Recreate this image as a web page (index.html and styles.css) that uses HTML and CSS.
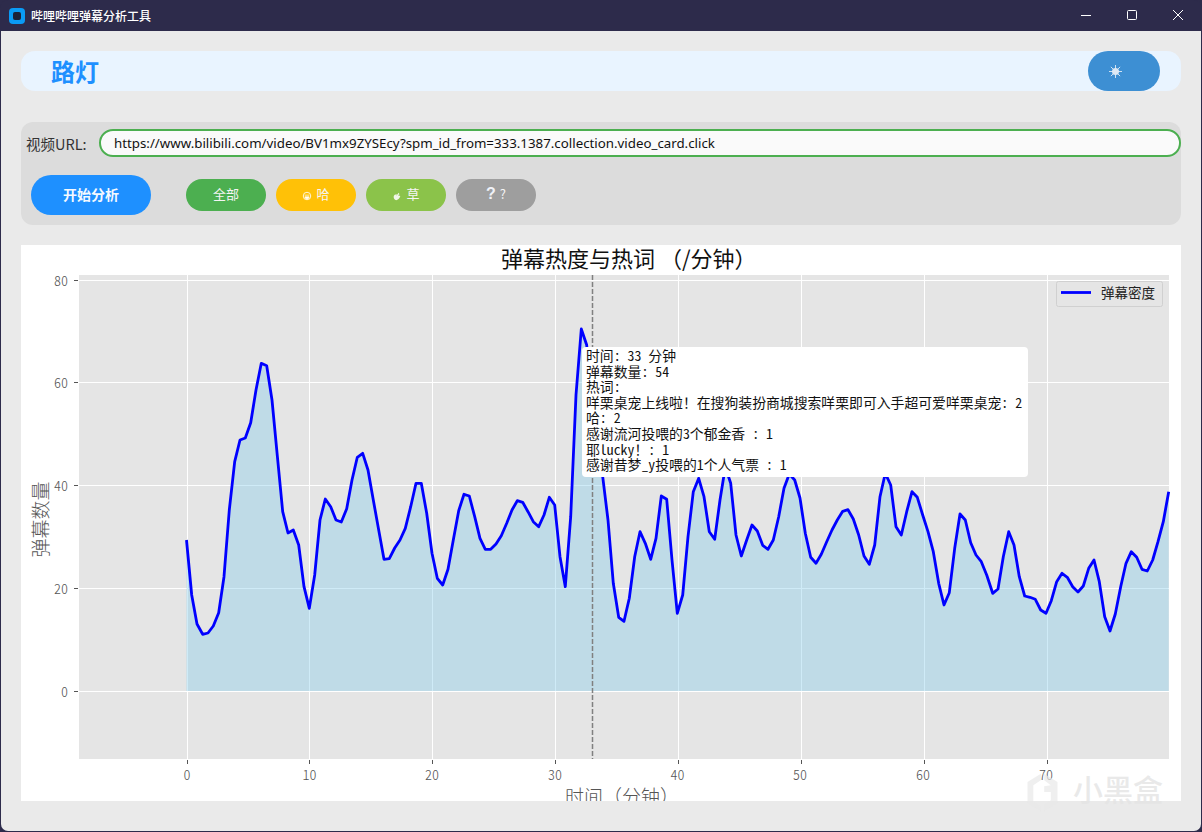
FILE: index.html
```html
<!DOCTYPE html>
<html lang="zh">
<head>
<meta charset="utf-8">
<title>哔哩哔哩弹幕分析工具</title>
<link rel="stylesheet" href="styles.css">
</head>
<body>
<div class="window">
  <div class="titlebar">
    <svg class="app-icon" viewBox="0 0 16 16"><rect width="16" height="16" rx="4" fill="#0a9bf5"/><rect x="4" y="4" width="8" height="8" rx="2" fill="#1c2238"/></svg>
    <span class="app-title">哔哩哔哩弹幕分析工具</span>
    <div class="win-controls">
      <svg class="win-btn" viewBox="0 0 46 31"><path d="M18 15.5h10" stroke="#fff" fill="none"/></svg>
      <svg class="win-btn" viewBox="0 0 46 31"><rect x="18.5" y="10.5" width="9" height="9" rx="1" stroke="#fff" fill="none"/></svg>
      <svg class="win-btn" viewBox="0 0 46 31"><path d="M18 10l10 10M28 10l-10 10" stroke="#fff" fill="none"/></svg>
    </div>
  </div>
  <main class="content">
    <header class="header">
      <h1 class="user-name">路灯</h1>
      <div class="theme-btn">
        <svg class="sun" viewBox="0 0 14 14"><circle cx="7" cy="7" r="3.8" fill="#dce8f4"/><path d="M7 0v14M0 7h14M2 2l10 10M12 2L2 12" stroke="#dce8f4" stroke-width="1"/></svg>
      </div>
    </header>
    <section class="panel">
      <div class="url-row">
        <span class="url-label">视频URL:</span>
        <div class="url-input">https://www.bilibili.com/video/BV1mx9ZYSEcy?spm_id_from=333.1387.collection.video_card.click</div>
      </div>
      <div class="action-row">
        <div class="start-btn">开始分析</div>
        <div class="filters">
          <div class="filter green">全部</div>
          <div class="filter yellow">
            <svg class="f-icon" viewBox="0 0 12 12"><circle cx="6" cy="6" r="4.5" fill="none" stroke="#fff" stroke-width="1"/><path d="M3.2 5h5.6M3.5 7h5a2.5 2.5 0 0 1-5 0z" stroke="#fff" stroke-width=".8" fill="#fff"/></svg>
            <span>哈</span>
          </div>
          <div class="filter lime">
            <svg class="f-icon" viewBox="0 0 12 12"><path d="M2 7c0-2 2-3 4-3L5 6l3-4 1 2-2 1 3 1c-1 3-3 5-5 5S2 9 2 7z" fill="#f1f6e8"/></svg>
            <span>草</span>
          </div>
          <div class="filter grey">
            <b class="q-icon">?</b>
            <span>?</span>
          </div>
        </div>
      </div>
    </section>
    <section class="chart">
      <svg class="plot" viewBox="21 245 1160 556" width="1160" height="556">
        <text class="chart-title" x="501" y="267">弹幕热度与热词 （/分钟）</text>
        <rect x="79" y="275" width="1090" height="484" fill="#e5e5e5"/>
        <g class="grid">
          <path d="M79 280.5H1169M79 382.5H1169M79 485.5H1169M79 588.5H1169M79 691.5H1169"/>
          <path d="M187.5 275V759M309.5 275V759M432.5 275V759M555.5 275V759M678.5 275V759M801.5 275V759M924.5 275V759M1047.5 275V759"/>
        </g>
        <g class="ticks">
          <path d="M74 280.5h4M74 382.5h4M74 485.5h4M74 588.5h4M74 691.5h4"/>
          <path d="M187.5 760v4M309.5 760v4M432.5 760v4M555.5 760v4M678.5 760v4M801.5 760v4M924.5 760v4M1047.5 760v4"/>
        </g>
        <g class="tick-text" text-anchor="end">
          <text x="68" y="285.5">80</text><text x="68" y="387.5">60</text><text x="68" y="490.5">40</text><text x="68" y="593.5">20</text><text x="68" y="696.5">0</text>
        </g>
        <g class="tick-text" text-anchor="middle">
          <text x="187" y="780">0</text><text x="309.5" y="780">10</text><text x="432" y="780">20</text><text x="555" y="780">30</text><text x="677.5" y="780">40</text><text x="800" y="780">50</text><text x="923" y="780">60</text><text x="1046" y="780">70</text>
        </g>
        <text class="axis-label" x="565" y="804">时间（分钟）</text>
        <text class="axis-label" text-anchor="middle" transform="translate(48 519.5) rotate(-90)">弹幕数量</text>
        <polygon class="area" points="186.5,691 186.5,540 191.7,595 197,624 202.7,634.3 208,633 213.3,626 218.7,612.7 224,576.7 229.3,510 234.7,461.7 240,440 245.3,438 250.7,422.7 256,390 261.3,363.3 266.7,365.7 272,400 277.4,456.7 282.7,511.7 288,533 293.3,530 298.7,545 304,586.7 309.3,608.3 314.7,575 320,520 325.3,499 330.7,506.7 336,520 341.3,522 346.7,508.7 352,480 357.3,457.3 362.7,453.3 368,470 373.3,500 378.7,530 384,559.3 389.3,558.7 394.7,548 400,540 405.3,528.3 410.7,506.7 416,483.3 421.3,483.3 426.7,513.3 432,553.3 437.3,578.3 442.7,585 448,569.3 453.3,540 458.7,510.7 464,494.3 469.3,496 474.7,516.7 480,538.3 485.3,549.3 490.7,549.3 496,544 501.3,535.7 506.7,523.3 512,510 517.3,500.7 522.7,502.3 528,511.7 533.3,521.7 538.7,526.7 544,515 549.3,497.3 554.7,505 560,556.7 565.3,586.7 570.7,516.7 576,395 581.3,329 586.7,345 592,410 597.3,440 602.7,476.7 608,520 613.3,583.3 618.7,617.3 624,621.3 629.3,598.3 634.7,556.7 640,531.7 645.3,543.3 650.7,559.3 656,538.3 661.3,496 666.7,499.3 672,560 677.3,613.3 682.7,595 688,536.7 693.3,491.7 698.7,478.3 704,496.7 709.3,531.7 714.7,539.3 720,500 725.3,467 730.7,483.3 736,535 741.3,556 746.7,540 752,525 757.3,531 762.7,545.3 768,549.3 773.3,540 778.7,516.7 784,488.3 789.3,474 794.7,480 800,498 805.3,533.3 810.7,557.3 816,563.3 821.3,554.3 826.7,541.7 832,530 837.3,520 842.7,511.3 848,509.7 853.3,519 858.7,535 864,556 869.3,564.3 874.7,545 880,496.7 885.3,473.3 890.7,485 896,526.7 901.3,535 906.7,511.7 912,491.7 917.3,497.3 922.7,515 928,531.7 933.3,551.7 938.7,583.3 944,605 949.3,592.7 954.7,548.3 960,514 965.3,520 970.7,542.7 976,555 981.3,561.7 986.7,575 992.7,593.3 998,589 1003.3,556.7 1008.7,531.7 1014,545 1019.3,576.7 1024.7,596 1030,597.3 1035.3,599.3 1040.7,610 1046,613.3 1051.3,600.7 1056.7,581.7 1062,573.3 1067.3,577.3 1072.7,586.7 1078,592 1083.3,586 1088.7,568.3 1094,560 1099.3,581.7 1104.7,616.7 1110,631 1115.3,614 1120.7,586.7 1126,563.3 1131.3,551.7 1136.7,557.3 1142,569.3 1147.3,571 1152.7,560 1158,541.7 1163.3,521.7 1168.7,491.7 1168.7,691"/>
        <polyline class="line" points="186.5,540 191.7,595 197,624 202.7,634.3 208,633 213.3,626 218.7,612.7 224,576.7 229.3,510 234.7,461.7 240,440 245.3,438 250.7,422.7 256,390 261.3,363.3 266.7,365.7 272,400 277.4,456.7 282.7,511.7 288,533 293.3,530 298.7,545 304,586.7 309.3,608.3 314.7,575 320,520 325.3,499 330.7,506.7 336,520 341.3,522 346.7,508.7 352,480 357.3,457.3 362.7,453.3 368,470 373.3,500 378.7,530 384,559.3 389.3,558.7 394.7,548 400,540 405.3,528.3 410.7,506.7 416,483.3 421.3,483.3 426.7,513.3 432,553.3 437.3,578.3 442.7,585 448,569.3 453.3,540 458.7,510.7 464,494.3 469.3,496 474.7,516.7 480,538.3 485.3,549.3 490.7,549.3 496,544 501.3,535.7 506.7,523.3 512,510 517.3,500.7 522.7,502.3 528,511.7 533.3,521.7 538.7,526.7 544,515 549.3,497.3 554.7,505 560,556.7 565.3,586.7 570.7,516.7 576,395 581.3,329 586.7,345 592,410 597.3,440 602.7,476.7 608,520 613.3,583.3 618.7,617.3 624,621.3 629.3,598.3 634.7,556.7 640,531.7 645.3,543.3 650.7,559.3 656,538.3 661.3,496 666.7,499.3 672,560 677.3,613.3 682.7,595 688,536.7 693.3,491.7 698.7,478.3 704,496.7 709.3,531.7 714.7,539.3 720,500 725.3,467 730.7,483.3 736,535 741.3,556 746.7,540 752,525 757.3,531 762.7,545.3 768,549.3 773.3,540 778.7,516.7 784,488.3 789.3,474 794.7,480 800,498 805.3,533.3 810.7,557.3 816,563.3 821.3,554.3 826.7,541.7 832,530 837.3,520 842.7,511.3 848,509.7 853.3,519 858.7,535 864,556 869.3,564.3 874.7,545 880,496.7 885.3,473.3 890.7,485 896,526.7 901.3,535 906.7,511.7 912,491.7 917.3,497.3 922.7,515 928,531.7 933.3,551.7 938.7,583.3 944,605 949.3,592.7 954.7,548.3 960,514 965.3,520 970.7,542.7 976,555 981.3,561.7 986.7,575 992.7,593.3 998,589 1003.3,556.7 1008.7,531.7 1014,545 1019.3,576.7 1024.7,596 1030,597.3 1035.3,599.3 1040.7,610 1046,613.3 1051.3,600.7 1056.7,581.7 1062,573.3 1067.3,577.3 1072.7,586.7 1078,592 1083.3,586 1088.7,568.3 1094,560 1099.3,581.7 1104.7,616.7 1110,631 1115.3,614 1120.7,586.7 1126,563.3 1131.3,551.7 1136.7,557.3 1142,569.3 1147.3,571 1152.7,560 1158,541.7 1163.3,521.7 1168.7,491.7"/>
        <path class="cursor" d="M592.5 275V759"/>
        <rect class="legend-box" x="1056.5" y="281.5" width="106" height="25" rx="2"/>
        <path class="legend-line" d="M1061 292.5h30"/>
        <text class="legend-text" x="1101" y="298">弹幕密度</text>
      </svg>
      <div class="tooltip">时间: 33 分钟
弹幕数量: 54
热词:
咩栗桌宠上线啦！在搜狗装扮商城搜索咩栗即可入手超可爱咩栗桌宠: 2
哈: 2
感谢流河投喂的3个郁金香 : 1
耶lucky！: 1
感谢昔梦_y投喂的1个人气票 : 1</div>
    </section>
    <div class="watermark">
      <svg class="wm-logo" viewBox="0 0 40 48"><path d="M2 12L18 2v8L9 16v20l9 6v5L2 37zM22 2l16 10v25L22 47v-8l8-5V24h-8v-7l8-1-8-6z" fill="#e8e8e8" fill-opacity=".7"/></svg>
      <span class="wm-text">小黑盒</span>
    </div>
  </main>
</div>
</body>
</html>
```

FILE: styles.css
```css
* { box-sizing: border-box; }
html, body { margin: 0; padding: 0; background: #2d2b4b; }
body {
  width: 1202px;
  height: 832px;
  overflow: hidden;
  font-family: "Noto Sans CJK SC", "Noto Sans", sans-serif;
}
.window {
  width: 1202px;
  height: 832px;
  display: flex;
  flex-direction: column;
  background: #2d2b4b;
  border-radius: 8px;
  overflow: hidden;
}
.titlebar {
  height: 31px;
  flex: none;
  display: flex;
  align-items: center;
  padding-left: 9px;
  color: #fff;
}
.app-icon { width: 16px; height: 16px; margin-right: 6px; }
.app-title { font-size: 12px; font-weight: 500; }
.win-controls { margin-left: auto; margin-right: 1px; display: flex; }
.win-btn { width: 46px; height: 31px; display: block; }

.content {
  position: relative;
  flex: 1;
  margin: 0 1px 1px;
  padding: 20px 20px 0;
  background: #eaeaea;
  border-radius: 0 0 7px 7px;
  display: flex;
  flex-direction: column;
}
.header {
  height: 40px;
  flex: none;
  background: #e9f4ff;
  border-radius: 14px;
  display: flex;
  align-items: center;
  justify-content: space-between;
  padding: 0 21px 0 30px;
}
.user-name { margin: 0; font-size: 24px; font-weight: 700; line-height: 40px; color: #1e90ff; }
.theme-btn {
  width: 72px;
  height: 40px;
  border-radius: 20px;
  background: #3d8fd3;
  display: flex;
  align-items: center;
  padding-left: 21px;
}
.sun { width: 13px; height: 13px; }

.panel {
  margin-top: 31px;
  height: 103px;
  flex: none;
  background: #dcdcdc;
  border-radius: 12px;
  padding: 7px 0 10px;
}
.url-row { display: flex; align-items: center; height: 28px; }
.url-label { font-size: 14.5px; color: #333; margin-left: 5px; width: 73px; }
.url-input {
  flex: 1;
  height: 28px;
  border: 2px solid #4caf50;
  border-radius: 14px;
  background: #fafafa;
  font-family: "Noto Sans", sans-serif;
  font-size: 13.3px;
  line-height: 24px;
  padding-left: 13px;
  color: #111;
  white-space: nowrap;
  overflow: hidden;
}
.action-row { display: flex; align-items: center; margin-top: 18px; padding-left: 10px; }
.start-btn {
  width: 120px;
  height: 40px;
  border-radius: 20px;
  background: #1e90ff;
  color: #f4f9ff;
  font-size: 14px;
  font-weight: 700;
  display: flex;
  align-items: center;
  justify-content: center;
  padding-bottom: 2px;
}
.filters { display: flex; gap: 10px; margin-left: 35px; }
.filter {
  width: 80px;
  height: 32px;
  border-radius: 16px;
  color: #f5f5f5;
  font-size: 13px;
  display: flex;
  align-items: center;
  justify-content: center;
  gap: 4px;
  padding-bottom: 3px;
}
.green { background: #4caf50; }
.yellow { background: #ffc107; }
.lime { background: #8bc34a; }
.grey { background: #9e9e9e; }
.f-icon { width: 10px; height: 10px; margin-top: 5px; }
.q-icon { font-size: 16px; font-family: "Liberation Sans", sans-serif; color: #f0f2f8; }

.chart {
  position: relative;
  margin-top: 20px;
  width: 1160px;
  height: 556px;
  flex: none;
  background: #fff;
  overflow: hidden;
}
.plot { display: block; }
.chart-title { font-size: 22px; fill: #111; }
.grid path { stroke: #fff; stroke-width: 1; fill: none; }
.ticks path { stroke: #555; stroke-width: 1; fill: none; }
.tick-text { font-size: 14px; fill: #555; font-weight: 300; font-feature-settings: "hwid"; }
.axis-label { font-size: 19px; fill: #555; font-weight: 300; }
.area { fill: rgba(135, 206, 235, .4); stroke: none; }
.line { fill: none; stroke: #0000ff; stroke-width: 2.8; stroke-linejoin: round; }
.cursor { stroke: #808080; stroke-width: 1.5; stroke-dasharray: 5 2; fill: none; }
.legend-box { fill: rgba(229, 229, 229, .8); stroke: #d0d0d0; stroke-width: 1; }
.legend-line { stroke: #0000ff; stroke-width: 2.8; fill: none; }
.legend-text { font-size: 13.5px; fill: #222; }

.tooltip {
  position: absolute;
  left: 561px;
  top: 102px;
  width: 446px;
  height: 130px;
  padding: 1px 0 0 4px;
  background: #fff;
  border-radius: 4px;
  font-size: 13.85px;
  line-height: 15.6px;
  color: #111;
  white-space: pre;
  font-feature-settings: "hwid";
}
.watermark {
  position: absolute;
  left: 1022px;
  top: 741px;
  display: flex;
  align-items: center;
  gap: 11px;
}
.wm-logo { width: 39px; height: 40px; }
.wm-text { font-size: 30px; line-height: 40px; margin-top: -8px; font-weight: 500; color: rgba(228, 228, 228, .8); }
```
